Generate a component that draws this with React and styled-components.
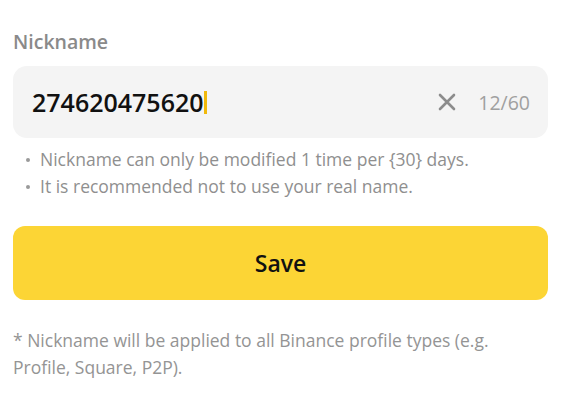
import React from "react";
import styled, { createGlobalStyle } from "styled-components";

const Global = createGlobalStyle`
  body {
    margin: 0;
    background: #ffffff;
    font-family: "Open Sans", "Noto Sans", sans-serif;
  }
`;

const Page = styled.div`
  padding: 27px 16px 0 13px;
  display: flex;
  flex-direction: column;
`;

const Label = styled.div`
  font-size: 19.5px;
  font-weight: 600;
  color: #8a8a8a;
  line-height: 30px;
  margin-bottom: 9px;
`;

const Field = styled.div`
  height: 72px;
  background: #f4f4f4;
  border-radius: 14px;
  display: flex;
  align-items: center;
  padding: 0 18px 0 19px;
`;

const Value = styled.div`
  flex: 1;
  display: flex;
  align-items: center;
  font-size: 25px;
  font-weight: 600;
  color: #111;
`;

const Caret = styled.span`
  display: inline-block;
  width: 2.5px;
  height: 23px;
  background: #f0b90b;
  margin-left: 0.5px;
`;

const Clear = styled.button`
  border: 0;
  background: none;
  padding: 0;
  margin-right: 22px;
  display: flex;
  align-items: center;
  cursor: pointer;
`;

const Counter = styled.span`
  font-size: 19.5px;
  color: #a0a0a0;
`;

const Hints = styled.ul`
  list-style: none;
  margin: 8px 0 0;
  padding: 0 0 0 13px;
`;

const Hint = styled.li`
  font-size: 17.5px;
  color: #8f8f8f;
  line-height: 27px;
  display: flex;
  align-items: center;
  &::before {
    content: "";
    width: 4px;
    height: 4px;
    border-radius: 50%;
    background: #9a9a9a;
    margin-right: 10px;
  }
`;

const SaveButton = styled.button`
  margin-top: 26px;
  height: 74px;
  border: 0;
  border-radius: 12px;
  background: #fcd535;
  font-family: inherit;
  font-size: 23px;
  font-weight: 600;
  color: #111;
  cursor: pointer;
`;

const Note = styled.p`
  margin: 27px 0 0;
  max-width: 500px;
  font-size: 17.5px;
  line-height: 27px;
  color: #949494;
`;

export default function App() {
  return (
    <Page>
      <Global />
      <Label>Nickname</Label>
      <Field>
        <Value>
          274620475620
          <Caret />
        </Value>
        <Clear aria-label="clear">
          <svg width="18" height="18" viewBox="0 0 18 18">
            <path d="M2 2 L16 16 M16 2 L2 16" stroke="#8c8c8c" strokeWidth="2.6" strokeLinecap="round" />
          </svg>
        </Clear>
        <Counter>12/60</Counter>
      </Field>
      <Hints>
        <Hint>Nickname can only be modified 1 time per {"{30}"} days.</Hint>
        <Hint>It is recommended not to use your real name.</Hint>
      </Hints>
      <SaveButton>Save</SaveButton>
      <Note>
        * Nickname will be applied to all Binance profile types (e.g. Profile, Square, P2P).
      </Note>
    </Page>
  );
}
